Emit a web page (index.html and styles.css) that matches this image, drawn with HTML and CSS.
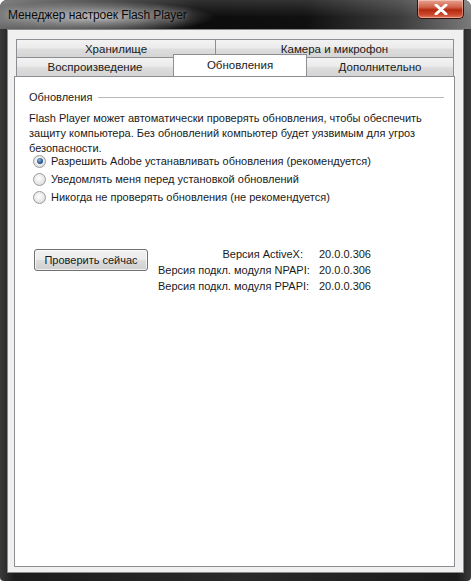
FILE: index.html
```html
<!DOCTYPE html>
<html lang="ru">
<head>
<meta charset="utf-8">
<title>Менеджер настроек Flash Player</title>
<link rel="stylesheet" href="styles.css">
</head>
<body>
<div class="window">
  <div class="titlebar">
    <div class="title">Менеджер настроек Flash Player</div>
    <div class="close">
      <svg width="14" height="11" viewBox="0 0 14 11"><path d="M2 1 L12 10 M12 1 L2 10" stroke="#fff" stroke-width="3" stroke-linecap="round"/></svg>
    </div>
  </div>
  <div class="client">
    <div class="tabs">
      <div class="tabrow row1">
        <div class="tab t-storage">Хранилище</div>
        <div class="tab t-camera">Камера и микрофон</div>
      </div>
      <div class="tabrow row2">
        <div class="tab t-play">Воспроизведение</div>
        <div class="tab t-upd active">Обновления</div>
        <div class="tab t-adv">Дополнительно</div>
      </div>
    </div>
    <div class="panel">
      <div class="group-head"><span>Обновления</span><i class="rule"></i></div>
      <p class="desc">Flash Player может автоматически проверять обновления, чтобы обеспечить защиту компьютера. Без обновлений компьютер будет уязвимым для угроз безопасности.</p>
      <div class="radios">
        <div class="radio checked"><span class="dot"></span>Разрешить Adobe устанавливать обновления (рекомендуется)</div>
        <div class="radio"><span class="dot"></span>Уведомлять меня перед установкой обновлений</div>
        <div class="radio"><span class="dot"></span>Никогда не проверять обновления (не рекомендуется)</div>
      </div>
      <div class="bottom">
        <div class="btn">Проверить сейчас</div>
        <div class="versions">
          <span class="lbl">Версия ActiveX:</span><span class="val">20.0.0.306</span>
          <span class="lbl">Версия подкл. модуля NPAPI:</span><span class="val">20.0.0.306</span>
          <span class="lbl">Версия подкл. модуля PPAPI:</span><span class="val">20.0.0.306</span>
        </div>
      </div>
    </div>
  </div>
</div>
</body>
</html>
```

FILE: styles.css
```css
html, body {
  margin: 0;
  padding: 0;
  background: #ffffff;
}
body {
  font-family: "Liberation Sans", Arial, sans-serif;
  font-size: 11px;
  color: #1a1a1a;
}
.window {
  width: 471px;
  height: 581px;
  box-sizing: border-box;
  background: linear-gradient(90deg, #3a3a3a 0%, #1c1c1c 3%, #2a2a2a 50%, #1c1c1c 97%, #3a3a3a 100%);
  border-radius: 7px 7px 4px 4px;
  display: flex;
  flex-direction: column;
  padding: 0 7px 8px 7px;
}
.titlebar {
  height: 29px;
  display: flex;
  justify-content: space-between;
  align-items: flex-start;
  margin: 0 -7px;
  padding: 0 8px 0 8px;
  border-radius: 7px 7px 0 0;
  background:
    radial-gradient(ellipse 120px 16px at 95px 17px, rgba(200,200,200,0.85), rgba(200,200,200,0) 100%),
    linear-gradient(180deg, rgba(255,255,255,0.15), rgba(0,0,0,0) 60%),
    linear-gradient(90deg, #6a6a6a 0%, #3a3a3a 20%, #0c0c0c 42%, #101010 65%, #3c3c3c 85%, #7a7a7a 100%);
}
.title {
  padding-top: 8px;
  font-size: 12px;
  letter-spacing: -0.1px;
  color: #0a0a0a;
  text-shadow: 0 0 6px rgba(255,255,255,0.5);
}
.close {
  width: 47px;
  height: 19px;
  margin-right: -1px;
  box-sizing: border-box;
  border: 1px solid #3b1010;
  border-top: none;
  border-radius: 0 0 5px 5px;
  background: linear-gradient(180deg, #e8a28f 0%, #d0624a 40%, #b42a10 55%, #c9452a 80%, #e07a58 100%);
  box-shadow: inset 0 0 0 1px rgba(255,255,255,0.35);
  display: flex;
  align-items: center;
  justify-content: center;
}
.client {
  flex: 1;
  background: #f0f0f0;
  border: 1px solid #8a8a8a;
  display: flex;
  flex-direction: column;
  padding: 9px 8px 5px 6px;
}
.tabs {
  display: flex;
  flex-direction: column;
  padding: 0 1px 0 2px;
  position: relative;
  z-index: 1;
}
.tabrow {
  display: flex;
}
.tab {
  box-sizing: border-box;
  border: 1px solid #8c8e94;
  border-bottom: none;
  background: linear-gradient(180deg, #f3f3f3 0%, #ebebeb 45%, #dddddd 55%, #d4d4d4 100%);
  display: flex;
  align-items: center;
  justify-content: center;
  color: #1a1a1a;
  font-size: 11.5px;
}
.row1 .tab { height: 18px; }
.row2 .tab { height: 19px; }
.t-storage { width: 200px; }
.t-camera { flex: 1; border-left: none; }
.t-play { width: 157px; }
.t-upd { width: 134px; }
.t-adv { flex: 1; }
.row2 .t-play { border-right: none; }
.row2 .t-adv { border-left: none; }
.tab.active {
  background: #ffffff;
  height: 22px;
  margin-top: -3px;
  margin-bottom: -1px;
  padding-bottom: 1px;
}
.panel {
  flex: 1;
  background: #ffffff;
  border: 1px solid #8c8e94;
  padding: 12px 10px 0 14px;
}
.group-head {
  display: flex;
  align-items: center;
  gap: 6px;
  height: 16px;
}
.group-head .rule {
  flex: 1;
  height: 0;
  border-top: 1px solid #b8b8b8;
  margin-top: 1px;
}
.desc {
  margin: 6px 0 0 0;
  line-height: 15px;
  padding-right: 8px;
}
.radios {
  margin-top: -4px;
  display: flex;
  flex-direction: column;
}
.radio {
  display: flex;
  align-items: center;
  height: 18px;
  padding-left: 4px;
}
.dot {
  width: 11px;
  height: 11px;
  border-radius: 50%;
  border: 1px solid #9a9a9a;
  background: radial-gradient(circle at 45% 40%, #ffffff 0%, #e6e6e6 60%, #cfcfcf 100%);
  margin-right: 5px;
  display: flex;
  align-items: center;
  justify-content: center;
  flex: none;
}
.radio.checked .dot::after {
  content: "";
  width: 6px;
  height: 6px;
  border-radius: 50%;
  background: radial-gradient(circle at 40% 35%, #8fb6dc 0%, #2a5d92 55%, #1b3f68 100%);
}
.bottom {
  display: flex;
  align-items: flex-start;
  margin-top: 43px;
}
.btn {
  width: 114px;
  height: 22px;
  box-sizing: border-box;
  margin-left: 5px;
  border: 1px solid #707070;
  border-radius: 3px;
  background: linear-gradient(180deg, #f2f2f2 0%, #ebebeb 48%, #dddddd 52%, #cfcfcf 100%);
  box-shadow: inset 0 0 0 1px rgba(255,255,255,0.7);
  display: flex;
  align-items: center;
  justify-content: center;
}
.versions {
  margin-left: 10px;
  display: grid;
  grid-template-columns: 145px auto;
  column-gap: 16px;
  row-gap: 0.5px;
  line-height: 15.5px;
  margin-top: -2px;
}
.versions span { white-space: nowrap; }
.versions .lbl { text-align: right; }
```
